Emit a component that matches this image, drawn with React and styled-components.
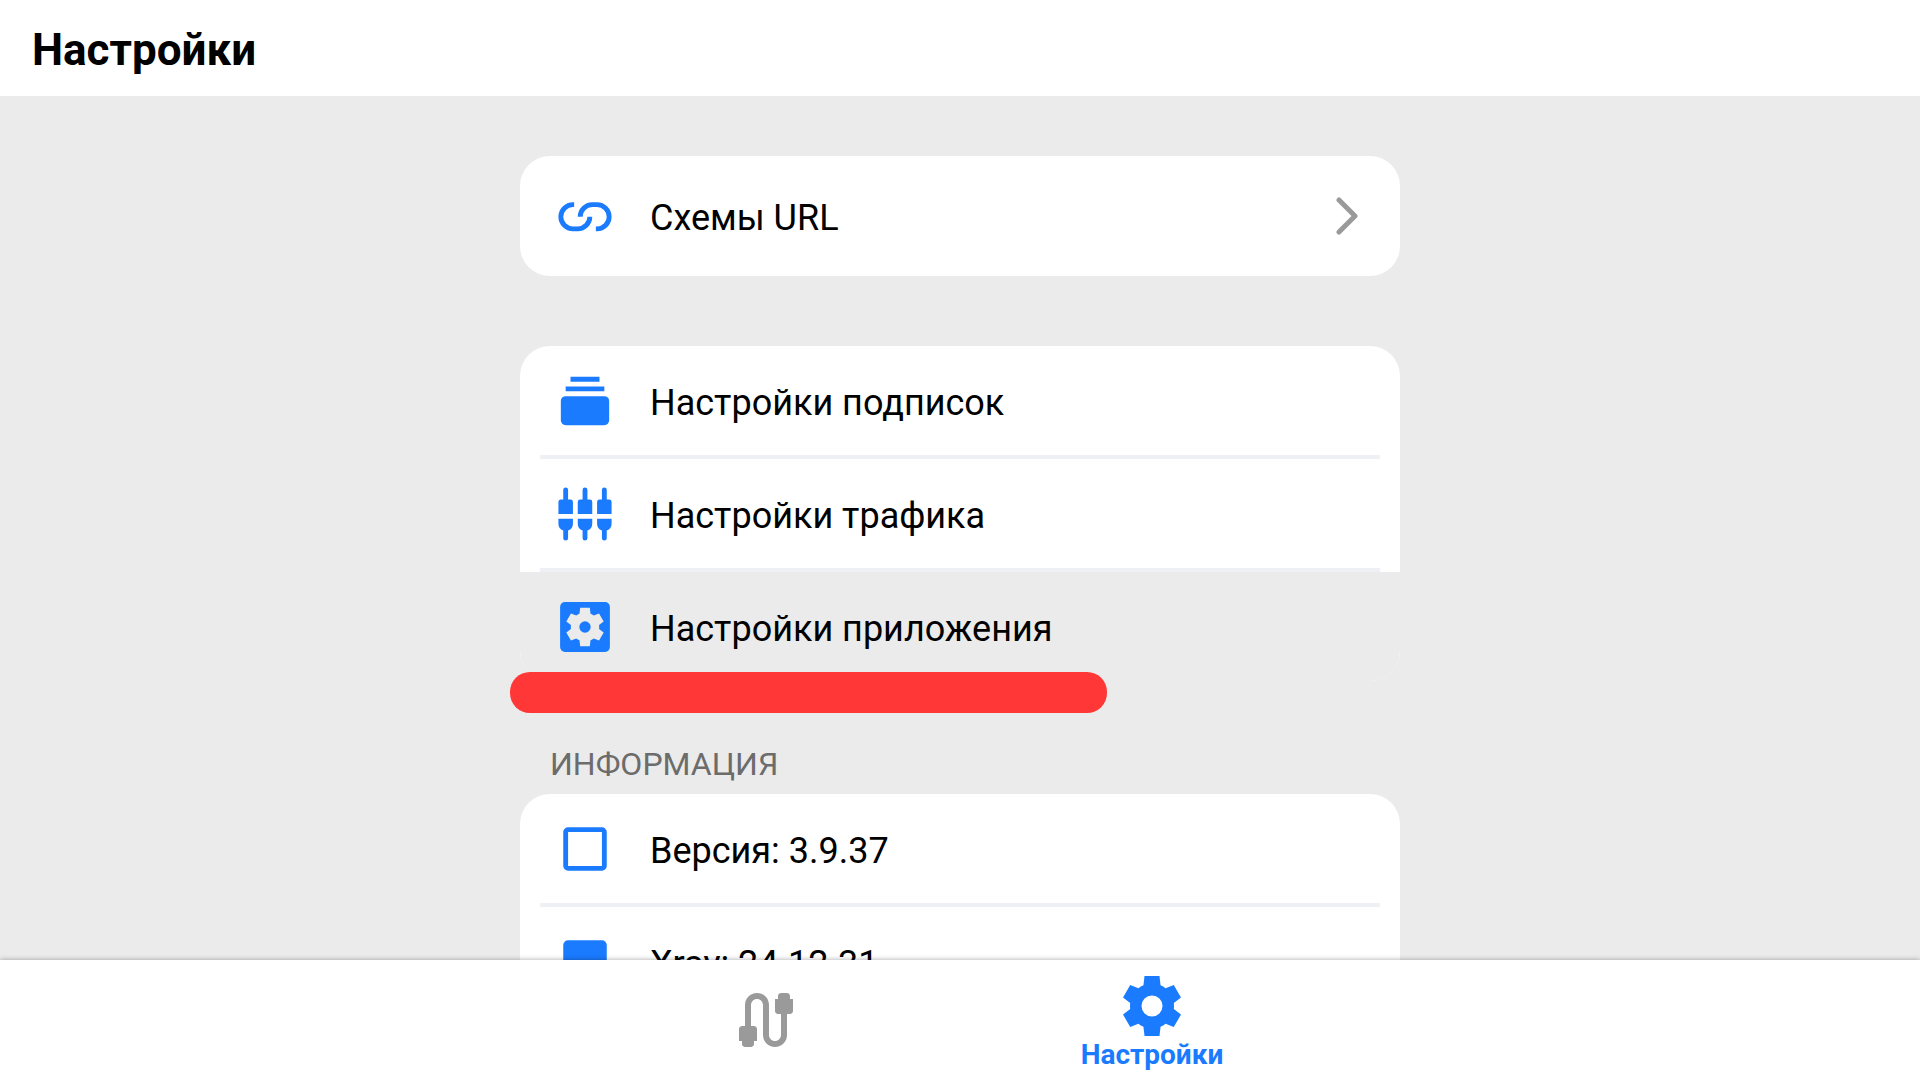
import React, { useState } from "react";
import styled, { createGlobalStyle } from "styled-components";
import { MdCable } from "react-icons/md";

const GlobalStyle = createGlobalStyle`
  * {
    box-sizing: border-box;
  }

  body {
    margin: 0;
    background: #ebebeb;
    color: #000;
    font-family: Roboto, "Liberation Sans", sans-serif;
  }
`;

const GEAR =
  "M19.27 13c.04-.33.06-.66.06-1s-.02-.67-.06-1l2.39-1.85-2.4-4.16-2.73 1.1c-.52-.4-1.08-.74-1.68-.98L14.5 2h-5l-.35 3.11c-.6.24-1.16.58-1.68.98L4.74 4.99l-2.4 4.16L4.73 11c-.04.33-.06.66-.06 1s.02.67.06 1l-2.39 1.85 2.4 4.16 2.73-1.1c.52.4 1.08.74 1.68.98L9.5 22h5l.35-3.11c.6-.24 1.16-.58 1.68-.98l2.73 1.1 2.4-4.16z";

const LinkIcon = () => (
  <svg viewBox="0 0 24 24" fill="none" stroke="currentColor" strokeWidth="2">
    <path d="M7.5 7.3H7a5 5 0 0 0 0 10h2a5 5 0 0 0 5-5" />
    <path d="M10 12.3a5 5 0 0 1 5-5h2a5 5 0 0 1 0 10h-.5" />
  </svg>
);

const SubscriptionsIcon = () => (
  <svg viewBox="0 0 24 24" fill="currentColor">
    <path d="M6 2h12v2H6zM4 6h16v2H4z" />
    <rect x="2" y="10" width="20" height="12" rx="2" />
  </svg>
);

const TrafficIcon = () => (
  <svg viewBox="0 0 24 24" fill="currentColor">
    {[0, 8, 16].map((x) => (
      <path
        key={x}
        transform={`translate(${x} 0)`}
        d="M3 2a1 1 0 0 1 2 0v4h1a1 1 0 0 1 1 1v5H1V7a1 1 0 0 1 1-1h1zM1 14h6v2a3 3 0 0 1-2 2.82V22a1 1 0 0 1-2 0v-3.18A3 3 0 0 1 1 16z"
      />
    ))}
  </svg>
);

const AppSettingsIcon = () => (
  <svg viewBox="0 0 24 24" fill="currentColor">
    <rect x="1.7" y="1.7" width="20.6" height="20.6" rx="2" />
    <path d={GEAR} fill="#ebebeb" transform="translate(2.4 2.4) scale(.8)" />
    <circle cx="12" cy="12" r="2.35" />
  </svg>
);

const VersionIcon = () => (
  <svg viewBox="0 0 24 24" fill="none" stroke="currentColor" strokeWidth="2">
    <rect x="4" y="4" width="16" height="16" rx="1" />
  </svg>
);

const CoreIcon = () => (
  <svg viewBox="0 0 24 24" fill="currentColor">
    <rect x="3" y="3" width="18" height="18" rx="2" />
  </svg>
);

const GearIcon = () => (
  <svg viewBox="0 0 24 24" fill="currentColor">
    <path
      fillRule="evenodd"
      d={`${GEAR}M12 8.5a3.5 3.5 0 1 0 0 7 3.5 3.5 0 0 0 0-7z`}
    />
  </svg>
);

const settings = [
  { id: "subs", label: "Настройки подписок", Icon: SubscriptionsIcon },
  { id: "traffic", label: "Настройки трафика", Icon: TrafficIcon },
  { id: "app", label: "Настройки приложения", Icon: AppSettingsIcon },
];

const info = [
  { id: "version", label: "Версия: 3.9.37", Icon: VersionIcon },
  { id: "xray", label: "Xray: 24.12.31", Icon: CoreIcon },
];

const App = () => {
  const [active, setActive] = useState("app");

  return (
    <Screen>
      <GlobalStyle />
      <Header>
        <Title>Настройки</Title>
      </Header>

      <Content>
        <Column>
          <Card>
            <Row $tall>
              <RowIcon><LinkIcon /></RowIcon>
              <RowLabel>Схемы URL</RowLabel>
              <Chevron viewBox="0 0 22 38">
                <path d="M3 3l16 16L3 35" />
              </Chevron>
            </Row>
          </Card>

          <MarkedCard>
            {settings.map(({ id, label, Icon }, i) => (
              <React.Fragment key={id}>
                {i > 0 && <Divider />}
                <Row $pressed={active === id} onClick={() => setActive(id)}>
                  <RowIcon><Icon /></RowIcon>
                  <RowLabel>{label}</RowLabel>
                </Row>
              </React.Fragment>
            ))}
            <Marker />
          </MarkedCard>

          <section>
            <SectionTitle>ИНФОРМАЦИЯ</SectionTitle>
            <Card>
              {info.map(({ id, label, Icon }, i) => (
                <React.Fragment key={id}>
                  {i > 0 && <Divider />}
                  <Row>
                    <RowIcon><Icon /></RowIcon>
                    <RowLabel>{label}</RowLabel>
                  </Row>
                </React.Fragment>
              ))}
            </Card>
          </section>
        </Column>
      </Content>

      <TabBar>
        <Tab aria-label="Подключение">
          <MdCable />
        </Tab>
        <Tab $active>
          <GearIcon />
          <span>Настройки</span>
        </Tab>
      </TabBar>
    </Screen>
  );
};

const Screen = styled.div`
  display: flex;
  flex-direction: column;
  height: 100vh;
`;

const Header = styled.header`
  flex: none;
  padding: 24px 32px 20px;
  background: #fff;
`;

const Title = styled.h1`
  margin: 0;
  font-size: 44px;
  line-height: 52px;
  font-weight: 700;
`;

const Content = styled.main`
  flex: 1;
  min-height: 0;
  overflow: hidden;
  padding: 60px 20px 0;
`;

const Column = styled.div`
  display: flex;
  flex-direction: column;
  max-width: 880px;
  margin: 0 auto;
`;

const Card = styled.div`
  border-radius: 30px;
  background: #fff;
`;

const MarkedCard = styled(Card)`
  position: relative;
  margin: 70px 0 60px;
`;

const Row = styled.button`
  display: flex;
  align-items: center;
  width: 100%;
  height: ${({ $tall }) => ($tall ? "120px" : "109px")};
  padding: 0 42px 0 36px;
  border: 0;
  border-radius: ${({ $pressed }) => ($pressed ? "0 0 30px 30px" : "0")};
  background: ${({ $pressed }) => ($pressed ? "#ebebeb" : "transparent")};
  color: inherit;
  font: inherit;
  text-align: left;
  cursor: pointer;
`;

const RowIcon = styled.span`
  display: flex;
  flex: none;
  width: 58px;
  height: 58px;
  margin-right: 36px;
  color: #1a7bff;

  svg {
    width: 100%;
    height: 100%;
  }
`;

const RowLabel = styled.span`
  flex: 1;
  padding-top: 4px;
  font-size: 36px;
  line-height: 44px;
`;

const Chevron = styled.svg`
  width: 22px;
  height: 38px;
  fill: none;
  stroke: #9a9a9a;
  stroke-width: 5;
  stroke-linecap: round;
  stroke-linejoin: round;
`;

const Divider = styled.div`
  height: 4px;
  margin: 0 20px;
  background: #efeff6;
`;

// highlight stroke drawn over the lower edge of the card
const Marker = styled.div`
  position: absolute;
  left: -10px;
  bottom: -32px;
  width: 597px;
  max-width: 100%;
  height: 41px;
  border-radius: 20px;
  background: #ff3737;
`;

const SectionTitle = styled.h2`
  margin: 0;
  padding: 3px 30px 10px;
  color: #6c6c6c;
  font-size: 32px;
  line-height: 40px;
  font-weight: 400;
`;

const TabBar = styled.nav`
  display: flex;
  flex: none;
  justify-content: center;
  height: 120px;
  background: #fff;
  box-shadow: 0 0 5px rgba(0, 0, 0, 0.35);
  z-index: 1;
`;

const Tab = styled.button`
  display: flex;
  flex-direction: column;
  align-items: center;
  justify-content: center;
  width: 386px;
  padding: 0 2px 0 0;
  border: 0;
  background: none;
  color: ${({ $active }) => ($active ? "#1a7bff" : "#9a9a9a")};
  font-family: inherit;
  font-size: 28px;
  line-height: 32px;
  font-weight: 700;
  cursor: pointer;

  svg {
    width: 72px;
    height: 72px;
  }

  span {
    margin: -3px 0 -1px;
  }
`;

export default App;
